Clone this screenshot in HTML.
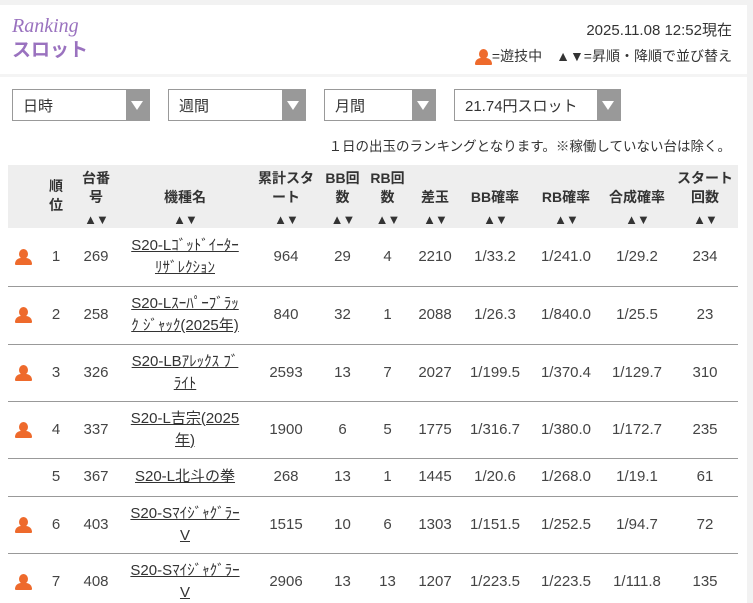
<!DOCTYPE html>
<html><head><meta charset="utf-8"><style>
*{margin:0;padding:0;box-sizing:border-box}
html,body{width:753px;height:603px;overflow:hidden}
body{background:#f2f2f2;font-family:"Liberation Sans","Noto Sans CJK JP",sans-serif;color:#333;position:relative}
#main{position:absolute;left:0;top:5px;width:747px;height:700px;background:#fff}
.hdrline{position:absolute;left:0;top:69px;width:747px;height:3px;background:#f4f4f4}
.rk{position:absolute;left:12px;top:10px;font-family:"Liberation Serif",serif;font-style:italic;font-size:20px;color:#9a72bf}
.sl{position:absolute;left:12px;top:30px;font-size:19px;font-weight:bold;color:#9a72bf}
.dt{position:absolute;right:15px;top:14px;font-size:15px;color:#333}
.lg{position:absolute;right:15px;top:41px;font-size:14px;color:#333}
.sel{position:absolute;top:89px;height:32px;border:1px solid #999;font-size:15px;padding:5px 0 0 10px;background:#fff}
.sel i{position:absolute;right:0;top:0;width:23px;height:30px;background:#999}
.sel i:after{content:"";position:absolute;left:5px;top:11px;border-left:6px solid transparent;border-right:6px solid transparent;border-top:9px solid #fff}
.note{position:absolute;right:22px;top:135px;font-size:13.5px}
table{position:absolute;left:8px;top:165px;width:730px;border-collapse:collapse;table-layout:fixed;font-size:15px}
th{background:#eee;font-size:14px;font-weight:bold;line-height:19px;height:63px;vertical-align:top;padding-top:4px;color:#333}
td{text-align:center;border-bottom:1px solid #999;line-height:22px;color:#444}
td.n{padding:0 12px}
td.n a{color:#333;text-decoration:underline}
.ar{font-size:13px;letter-spacing:-1px;position:relative;top:3px}
.p{display:inline-block;width:17px;height:16px;position:relative;vertical-align:middle}
.p:before{content:"";position:absolute;left:4px;top:0;width:9px;height:10px;border-radius:50%;background:#ee6a2c}
.p:after{content:"";position:absolute;left:0;top:9px;width:17px;height:7px;border-radius:6px 6px 1px 1px;background:#ee6a2c}
</style></head><body>
<div id="main">
<div class="rk">Ranking</div>
<div class="sl">スロット</div>
<div class="dt">2025.11.08 12:52現在</div>
<div class="lg"><span class="p"></span>=遊技中　▲▼=昇順・降順で並び替え</div>
<div class="hdrline"></div>
</div>
<div class="sel" style="left:12px;width:138px">日時<i></i></div>
<div class="sel" style="left:168px;width:138px">週間<i></i></div>
<div class="sel" style="left:324px;width:112px">月間<i></i></div>
<div class="sel" style="left:454px;width:167px">21.74円スロット<i></i></div>
<div class="note">１日の出玉のランキングとなります。※稼働していない台は除く。</div>
<table>
<colgroup><col style="width:30px"><col style="width:36px"><col style="width:44px"><col style="width:134px"><col style="width:68px"><col style="width:45px"><col style="width:45px"><col style="width:50px"><col style="width:70px"><col style="width:72px"><col style="width:70px"><col style="width:66px"></colgroup>
<tr><th></th><th style="padding-top:12px">順<br>位</th><th>台番<br>号<br><span class="ar">▲▼</span></th><th>&nbsp;<br>機種名<br><span class="ar">▲▼</span></th><th>累計スタ<br>ート<br><span class="ar">▲▼</span></th><th>BB回<br>数<br><span class="ar">▲▼</span></th><th>RB回<br>数<br><span class="ar">▲▼</span></th><th>&nbsp;<br>差玉<br><span class="ar">▲▼</span></th><th>&nbsp;<br>BB確率<br><span class="ar">▲▼</span></th><th>&nbsp;<br>RB確率<br><span class="ar">▲▼</span></th><th>&nbsp;<br>合成確率<br><span class="ar">▲▼</span></th><th>スタート<br>回数<br><span class="ar">▲▼</span></th></tr>
<tr style="height:58px"><td><span class="p"></span></td><td>1</td><td>269</td><td class="n"><a>S20-Lｺﾞｯﾄﾞｲｰﾀｰ ﾘｻﾞﾚｸｼｮﾝ</a></td><td>964</td><td>29</td><td>4</td><td>2210</td><td>1/33.2</td><td>1/241.0</td><td>1/29.2</td><td>234</td></tr>
<tr style="height:58px"><td><span class="p"></span></td><td>2</td><td>258</td><td class="n"><a>S20-Lｽｰﾊﾟｰﾌﾞﾗｯｸ ｼﾞｬｯｸ(2025年)</a></td><td>840</td><td>32</td><td>1</td><td>2088</td><td>1/26.3</td><td>1/840.0</td><td>1/25.5</td><td>23</td></tr>
<tr style="height:57px"><td><span class="p"></span></td><td>3</td><td>326</td><td class="n"><a>S20-LBｱﾚｯｸｽ ﾌﾞﾗｲﾄ</a></td><td>2593</td><td>13</td><td>7</td><td>2027</td><td>1/199.5</td><td>1/370.4</td><td>1/129.7</td><td>310</td></tr>
<tr style="height:57px"><td><span class="p"></span></td><td>4</td><td>337</td><td class="n"><a>S20-L吉宗(2025年)</a></td><td>1900</td><td>6</td><td>5</td><td>1775</td><td>1/316.7</td><td>1/380.0</td><td>1/172.7</td><td>235</td></tr>
<tr style="height:38px"><td></td><td>5</td><td>367</td><td class="n"><a>S20-L北斗の拳</a></td><td>268</td><td>13</td><td>1</td><td>1445</td><td>1/20.6</td><td>1/268.0</td><td>1/19.1</td><td>61</td></tr>
<tr style="height:57px"><td><span class="p"></span></td><td>6</td><td>403</td><td class="n"><a>S20-SﾏｲｼﾞｬｸﾞﾗｰV</a></td><td>1515</td><td>10</td><td>6</td><td>1303</td><td>1/151.5</td><td>1/252.5</td><td>1/94.7</td><td>72</td></tr>
<tr style="height:57px"><td><span class="p"></span></td><td>7</td><td>408</td><td class="n"><a>S20-SﾏｲｼﾞｬｸﾞﾗｰV</a></td><td>2906</td><td>13</td><td>13</td><td>1207</td><td>1/223.5</td><td>1/223.5</td><td>1/111.8</td><td>135</td></tr>
</table>
</body></html>
